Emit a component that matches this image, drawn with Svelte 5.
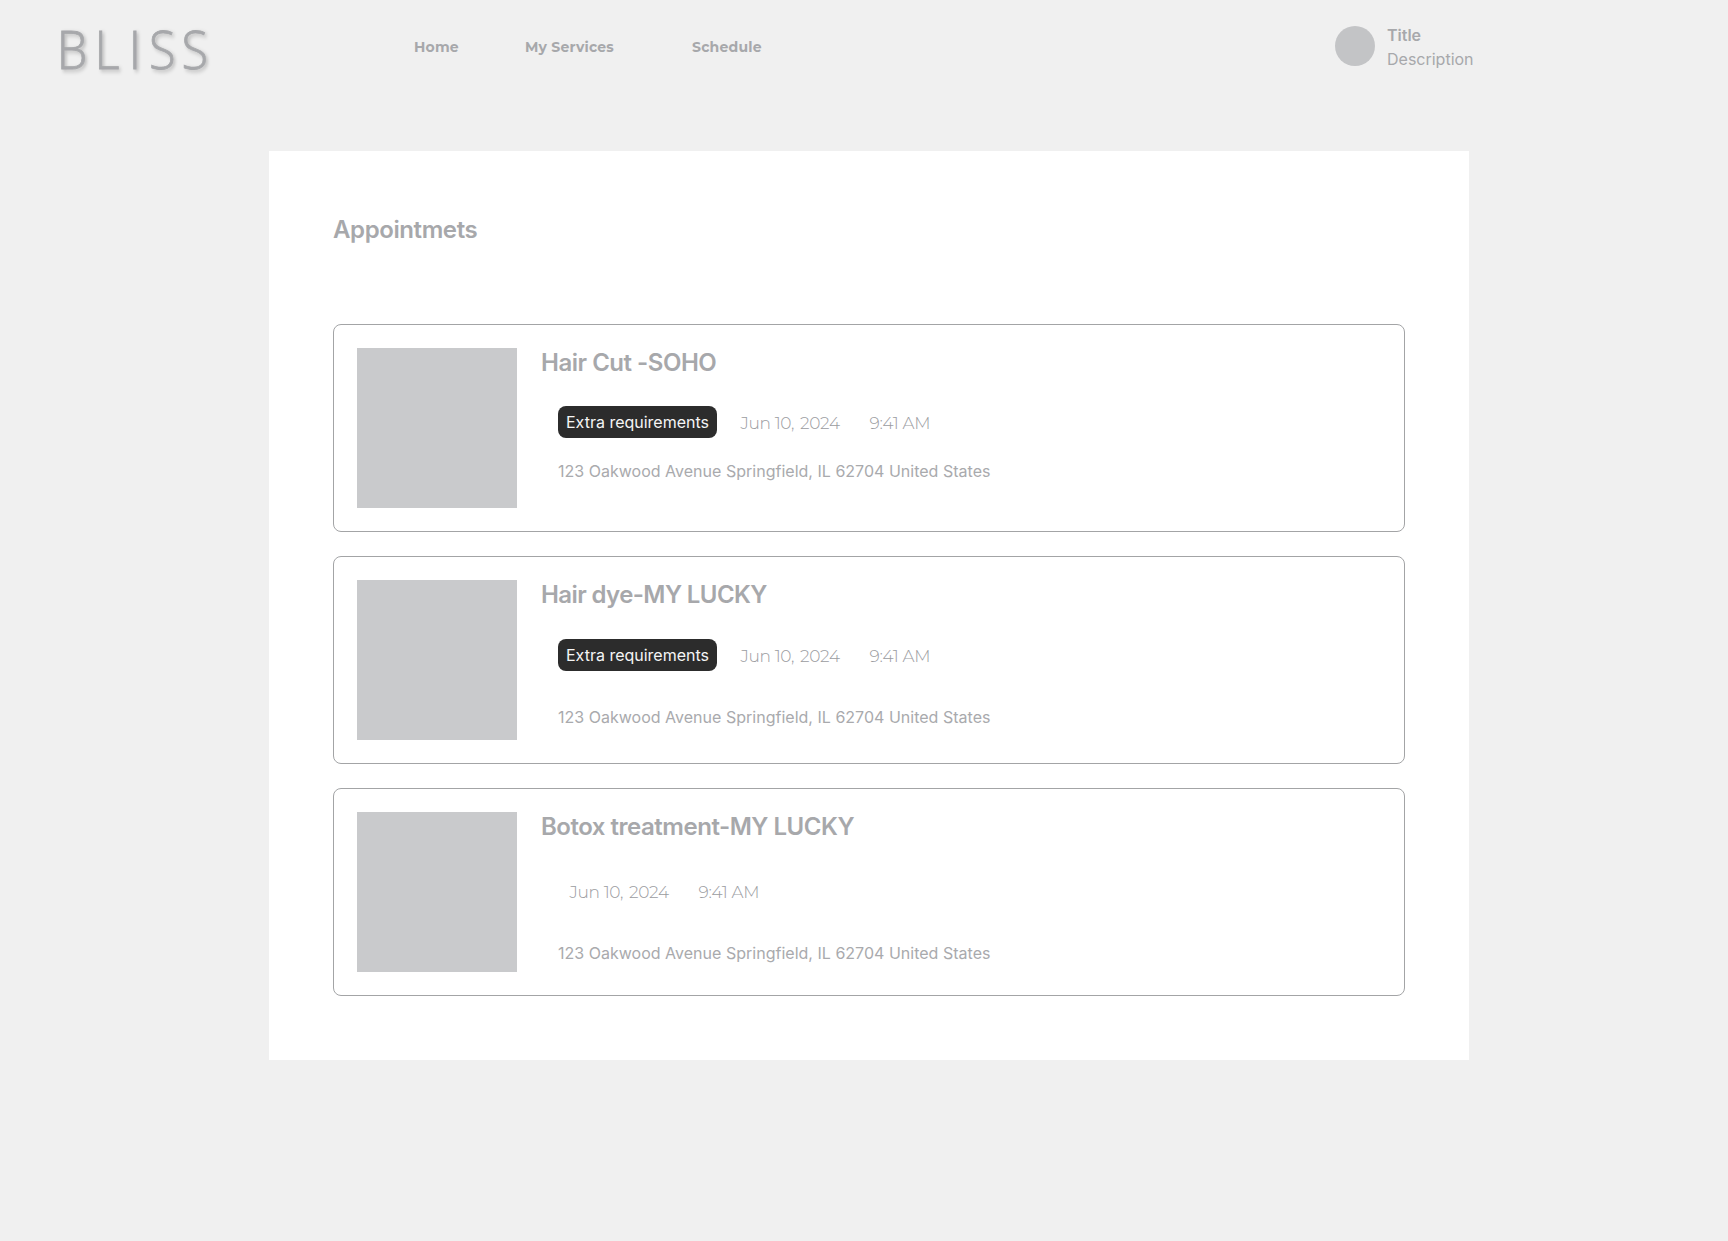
<script>
  const links = ['Home', 'My Services', 'Schedule'];
  const address = '123 Oakwood Avenue Springfield, IL 62704 United States';
  const appointments = [
    { name: 'Hair Cut -SOHO', extra: true, layout: 'compact' },
    { name: 'Hair dye-MY LUCKY', extra: true, layout: 'regular' },
    { name: 'Botox treatment-MY LUCKY', extra: false, layout: 'plain' }
  ];
</script>

<div class="page">
  <header>
    <div class="logo">
      <svg width="160" height="60" viewBox="0 0 160 60" role="img" aria-label="BLISS">
        <text transform="scale(0.92 1)" x="0.8 41.8 79 101 136.5" y="49">BLISS</text>
      </svg>
    </div>
    <nav>
      {#each links as link}
        <a href="#top"><span>{link}</span></a>
      {/each}
    </nav>
    <div class="profile">
      <div class="avatar"></div>
      <div class="who">
        <strong>Title</strong>
        <span>Description</span>
      </div>
    </div>
  </header>

  <main>
    <h1>Appointmets</h1>
    <div class="list">
      {#each appointments as item}
        <article class={item.layout}>
          <div class="thumb"></div>
          <div class="details">
            <h2>{item.name}</h2>
            <div class="meta">
              {#if item.extra}<span class="tag">Extra requirements</span>{/if}
              <span class="date">Jun 10, <span class="year">2024</span></span>
              <span class="time">9:41 AM</span>
            </div>
            <p>{address}</p>
          </div>
        </article>
      {/each}
    </div>
  </main>
</div>

<style>
  :global(body) { background: #f0f0f0; }
  .page {
    min-height: 1241px;
    background: #f0f0f0;
    color: #a7a8ab;
    font-family: Inter, sans-serif;
    font-size: 16px;
    line-height: 22px;
    box-sizing: border-box;
  }
  header {
    height: 151px;
    box-sizing: border-box;
    padding: 20px 0 0 56px;
    display: flex;
    align-items: flex-start;
  }
  .logo { width: 358px; height: 60px; }
  .logo svg { display: block; overflow: visible; }
  .logo text {
    font-family: 'Open Sans', sans-serif;
    font-weight: 300;
    font-size: 53px;
    fill: #a7a8ab;
    stroke: #a7a8ab;
    stroke-width: 0.8px;
    filter: drop-shadow(2px 2px 2px rgba(0, 0, 0, 0.22));
  }
  nav {
    display: grid;
    grid-template-columns: 111px 167px 643px;
    padding-top: 16.5px;
  }
  nav a {
    color: inherit;
    text-decoration: none;
    font: 700 14px/21px Montserrat, 'Open Sans', sans-serif;
    letter-spacing: 0.2px;
    white-space: nowrap;
  }
  .profile { display: flex; gap: 12px; padding-top: 6px; }
  .avatar { width: 40px; height: 40px; border-radius: 50%; background: #c3c4c6; }
  .who { display: flex; flex-direction: column; gap: 2px; margin-top: -2px; }
  .who strong { font-weight: 600; }
  main {
    width: 1200px;
    margin-left: 269px;
    padding: 64px;
    box-sizing: border-box;
    background: #fff;
  }
  h1, h2 {
    margin: 0;
    font-size: 24px;
    line-height: 29px;
    font-weight: 600;
    letter-spacing: -0.02em;
  }
  h1 { margin-bottom: 80px; letter-spacing: -0.4px; }
  .list { display: flex; flex-direction: column; gap: 24px; }
  article {
    display: flex;
    gap: 24px;
    height: 208px;
    padding: 23px;
    border: 1px solid #a3a4a6;
    border-radius: 8px;
    box-sizing: border-box;
  }
  .regular h2 { letter-spacing: -0.6px; }
  .thumb { width: 160px; height: 160px; background: #c9cacc; }
  .meta {
    display: flex;
    align-items: center;
    height: 32px;
    margin: 30px 0 35px 17px;
  }
  .compact .meta { margin: 29px 0 22px 17px; }
  .plain .meta { margin: 34px 0 35px 23px; }
  .tag {
    width: 159px;
    height: 32px;
    line-height: 32px;
    text-align: center;
    border-radius: 8px;
    background: #2c2c2c;
    color: #f5f5f5;
  }
  .date, .time {
    font: 300 17px/22px Montserrat, Lato, sans-serif;
    letter-spacing: -0.35px;
    padding-top: 2px;
    color: #9b9c9f;
    white-space: nowrap;
  }
  .date { width: 129px; margin-left: 23.6px; }
  .year { margin-left: 2px; }
  .plain .date { margin-left: 5.6px; }
  p { margin: 0 0 0 17px; color: #a9aaad; letter-spacing: 0.015px; }
</style>
